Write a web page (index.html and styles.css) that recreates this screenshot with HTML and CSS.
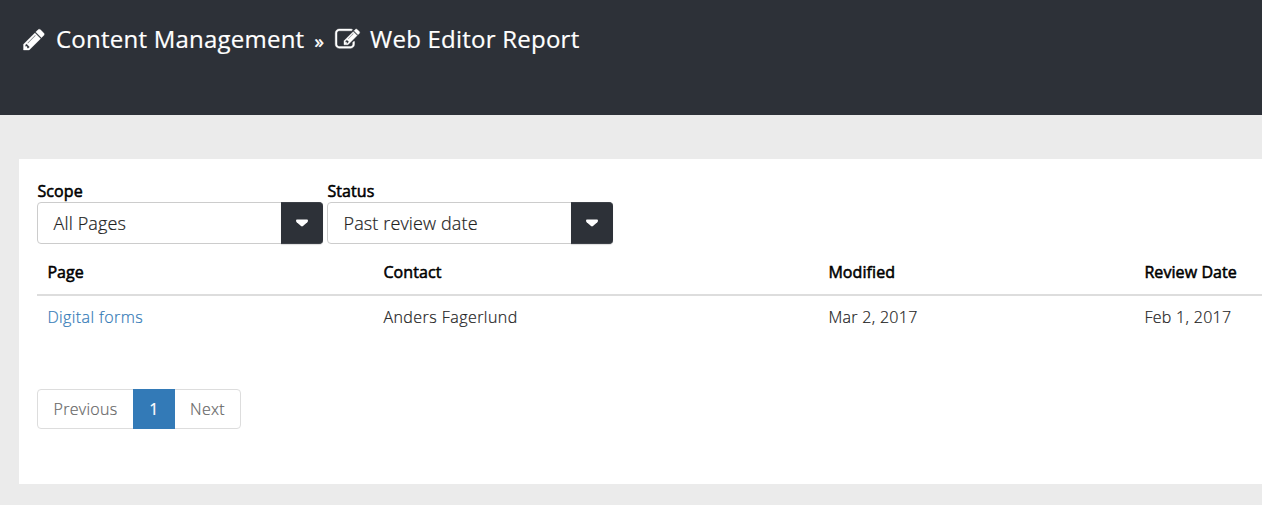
FILE: index.html
```html
<!DOCTYPE html>
<html lang="en"><head><meta charset="utf-8"><title>Web Editor Report</title><link rel="stylesheet" href="styles.css"></head>
<body>
<header class="topbar">
<h1 class="crumbs">
<svg class="pencil" viewBox="0 0 1536 1536"><path fill="#fff" stroke="#fff" stroke-width="25" d="M363 1408l91-91-235-235-91 91v107h128v128zM886 480q0-22-22-22-10 0-17 7l-542 542q-7 7-7 17 0 22 22 22 10 0 17-7l542-542q7-7 7-17zM832 288l416 416-832 832H0v-416zM1515 384q0 53-37 90l-166 166-416-416 165-165q36-38 91-38 53 0 91 38l235 234q37 39 37 91z"/></svg>
<span>Content Management</span><span class="sep">»</span>
<svg class="edit" viewBox="0 0 1792 1536"><path fill="#fff" stroke="#fff" stroke-width="30" d="M888 1056l116-116-152-152-116 116v56h96v96zM1328 336q-16-16-33 1L945 687q-17 17-1 33t33-1l350-350q17-17 1-33zM1408 930v190q0 119-84 204t-204 84H288q-119 0-203-84T0 1120V288Q0 169 85 85T288 0h832q63 0 117 25 15 7 18 23 3 17-9 29l-49 49q-14 14-32 8-23-6-45-6H288q-66 0-113 47t-47 113v832q0 66 47 113t113 47h832q66 0 113-47t47-113V994q0-13 9-22l64-64q15-15 35-7t20 29zM1312 192l288 288-672 672H640V864zM1756 324l-92 92-288-288 92-92q28-28 68-28t68 28l152 152q28 28 28 68t-28 68z"/></svg>
<span>Web Editor Report</span></h1>
</header>
<main class="panel">
<form class="filters">
<div class="field"><label>Scope</label><div class="select"><span>All Pages</span><span class="toggle"><svg viewBox="0 0 12 8"><path d="M1 .5h10q1 0 1 1t-.7 1.7L7 7.1q-1 .8-2 0L.7 3.2Q0 2.5 0 1.5t1-1z" fill="#fff"/></svg></span></div></div>
<div class="field"><label>Status</label><div class="select"><span>Past review date</span><span class="toggle"><svg viewBox="0 0 12 8"><path d="M1 .5h10q1 0 1 1t-.7 1.7L7 7.1q-1 .8-2 0L.7 3.2Q0 2.5 0 1.5t1-1z" fill="#fff"/></svg></span></div></div>
</form>
<table class="report"><thead><tr><th class="page">Page</th><th class="contact">Contact</th><th class="modified">Modified</th><th>Review Date</th></tr></thead>
<tbody><tr><td><a href="#">Digital forms</a></td><td class="name">Anders Fagerlund</td><td>Mar 2, 2017</td><td>Feb 1, 2017</td></tr></tbody></table>
<nav class="pager"><a class="prev">Previous</a><a class="active">1</a><a class="next">Next</a></nav>
</main>
</body></html>
```

FILE: styles.css
```css
* { box-sizing: border-box; }
body { margin: 0; background: #ebebeb; color: #222; font: 300 16px/22px "Open Sans", sans-serif; letter-spacing: .3px; -webkit-text-stroke: .2px; }
.topbar { height: 115px; background: #2d3138; padding: 22px 0 0 23px; }
.crumbs { display: flex; align-items: center; margin: 0; height: 34px; color: #fff; font-size: 24px; font-weight: 400; line-height: 34px; letter-spacing: .23px; white-space: nowrap; }
.pencil { width: 22px; height: 21px; margin-right: 11px; overflow: visible; }
.edit { width: 25px; height: 21px; margin: 0 10px 0 0; overflow: visible; }
.sep { margin: 0 11px 0 10px; padding-top: 4px; font-size: 19px; -webkit-text-stroke: .4px; }
.panel { height: 325px; margin: 44px 0 0 19px; padding: 21px 0 0 18px; background: #fff; }
.filters { display: flex; gap: 4px; height: 70px; }
.field { width: 286px; }
.field label { display: block; padding-left: .4px; color: #000; font-weight: 400; letter-spacing: .1px; -webkit-text-stroke: .55px; }
.select { display: flex; justify-content: space-between; height: 42px; border: 1px solid #ccc; border-radius: 4px; padding-left: 15.5px; font-size: 18px; line-height: 40px; letter-spacing: .13px; }
.toggle { display: grid; place-items: center; width: 42px; height: 42px; margin: -1px -1px 0 0; padding-right: 1px; border: 1px solid #3c4047; border-left: 0; border-right: 0; border-radius: 0 4px 4px 0; background: #2d3138; box-shadow: 0 1px 1px #0002; }
.toggle svg { width: 12px; height: 8px; }
.report { width: 100%; table-layout: fixed; border-collapse: collapse; }
.report th, .report td { padding: 11px 10px 11px 10.4px; text-align: left; white-space: nowrap; }
.report td { padding-top: 10px; }
.report th { border-bottom: 2px solid #ddd; color: #000; font-weight: 400; letter-spacing: .08px; -webkit-text-stroke: .55px; }
.page { width: 336px; }
.contact { width: 445px; }
.modified { width: 316px; }
.name { letter-spacing: .45px; }
.report a { color: #337ab7; text-decoration: none; letter-spacing: .4px; }
.pager { display: inline-flex; width: 204px; height: 40px; margin-top: 50px; border: 1px solid #ddd; border-radius: 4px; color: #666; line-height: 38px; text-align: center; }
.prev { width: 95px; }
.next { flex: 1; }
.pager .active { width: 42px; margin: -1px 0; background: #337ab7; color: #fff; line-height: 40px; font-weight: 400; }
```
